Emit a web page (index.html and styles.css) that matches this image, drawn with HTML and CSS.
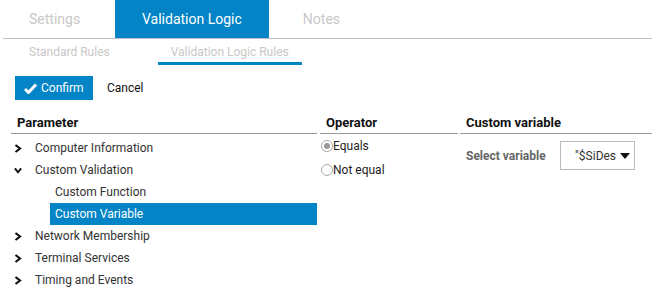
FILE: index.html
```html
<!DOCTYPE html>
<html lang="en">
<head>
  <meta charset="UTF-8" />
  <title>Validation Logic</title>
  <link rel="stylesheet" href="styles.css">
</head>
<body>
  <div class="tabs">
    <div class="tab tab-settings">Settings</div>
    <div class="tab tab-active">Validation Logic</div>
    <div class="tab tab-notes">Notes</div>
  </div>

  <div class="subtabs">
    <div class="subtab">Standard Rules</div>
    <div class="subtab subtab-active">Validation Logic Rules</div>
  </div>

  <div class="toolbar">
    <button class="btn-confirm">
      <svg width="13" height="11" viewBox="0 0 13 11"><path d="M1 6 L4.5 9.5 L12 1.5" fill="none" stroke="#fff" stroke-width="3"/></svg>
      Confirm
    </button>
    <span class="btn-cancel">Cancel</span>
  </div>

  <div class="panels">
    <div class="col col-param">
      <div class="col-head">Parameter</div>
      <ul class="tree">
        <li class="node"><svg class="chev" width="8" height="9" viewBox="0 0 8 9"><path d="M1.5 1 L6 4.5 L1.5 8" fill="none" stroke="#111" stroke-width="2.2"/></svg>Computer Information</li>
        <li class="node"><svg class="chev" width="8" height="9" viewBox="0 0 9 8"><path d="M1 1.5 L4.5 6 L8 1.5" fill="none" stroke="#111" stroke-width="2.2"/></svg>Custom Validation</li>
        <li class="leaf">Custom Function</li>
        <li class="leaf leaf-selected">Custom Variable</li>
        <li class="node"><svg class="chev" width="8" height="9" viewBox="0 0 8 9"><path d="M1.5 1 L6 4.5 L1.5 8" fill="none" stroke="#111" stroke-width="2.2"/></svg>Network Membership</li>
        <li class="node"><svg class="chev" width="8" height="9" viewBox="0 0 8 9"><path d="M1.5 1 L6 4.5 L1.5 8" fill="none" stroke="#111" stroke-width="2.2"/></svg>Terminal Services</li>
        <li class="node"><svg class="chev" width="8" height="9" viewBox="0 0 8 9"><path d="M1.5 1 L6 4.5 L1.5 8" fill="none" stroke="#111" stroke-width="2.2"/></svg>Timing and Events</li>
      </ul>
    </div>

    <div class="col col-op">
      <div class="col-head">Operator</div>
      <label class="radio"><span class="dot dot-on"></span>Equals</label>
      <label class="radio"><span class="dot"></span>Not equal</label>
    </div>

    <div class="col col-var">
      <div class="col-head">Custom variable</div>
      <div class="var-row">
        <span class="var-label">Select variable</span>
        <div class="select">
          <span class="select-text">"$SiDes</span>
          <svg width="10" height="6" viewBox="0 0 10 6"><path d="M0 0 H10 L5 6 Z" fill="#111"/></svg>
        </div>
      </div>
    </div>
  </div>
</body>
</html>
```

FILE: styles.css
```css
* {
  box-sizing: border-box;
  margin: 0;
  padding: 0;
}

body {
  font-family: Roboto, "Liberation Sans", sans-serif;
  font-size: 12px;
  color: #222;
  background: #fff;
  width: 652px;
  height: 292px;
  overflow: hidden;
  white-space: nowrap;
}

/* Top tabs */
.tabs {
  display: flex;
  height: 39px;
  margin-left: 3px;
  border-bottom: 1px solid #c0c0c0;
}

.tab {
  height: 38px;
  line-height: 38px;
  font-size: 14px;
  color: #c8c8c8;
  padding: 0 27px;
}

.tab-settings {
  width: 112px;
  padding-left: 26px;
}

.tab-active {
  background-color: #0284c6;
  color: #fff;
}

.tab-notes {
  padding-left: 34px;
}

/* Sub tabs */
.subtabs {
  display: flex;
  height: 26px;
  margin-left: 16px;
  gap: 35px;
}

.subtab {
  padding: 6px 13px 0;
  color: #c8c8c8;
  font-size: 12px;
  height: 26px;
}

.subtab-active {
  border-bottom: 3px solid #0284c6;
}

/* Confirm / cancel */
.toolbar {
  display: flex;
  align-items: center;
  margin: 11px 0 0 15px;
  height: 24px;
}

.btn-confirm {
  display: flex;
  align-items: center;
  gap: 4px;
  height: 24px;
  width: 78px;
  padding-left: 9px;
  border: none;
  background-color: #0284c6;
  color: #fff;
  font-family: inherit;
  font-size: 12px;
}

.btn-cancel {
  margin-left: 14px;
  color: #111;
}

/* Columns */
.panels {
  display: flex;
  margin-top: 15px;
}

.col-head {
  font-weight: 700;
  font-size: 13px;
  color: #111;
  height: 19px;
  line-height: 16px;
  border-bottom: 1px solid #999;
  padding-left: 6px;
}

.col-param {
  width: 306px;
  margin-left: 11px;
}

.col-op {
  width: 138px;
  margin-left: 3px;
}

.col-var {
  flex: 1;
  margin-left: 2px;
}

.tree {
  list-style: none;
  margin-top: 3px;
}

.tree li {
  height: 22px;
  line-height: 22px;
  display: flex;
  align-items: center;
}

.node {
  padding-left: 3px;
  color: #333;
}

.chev {
  margin-right: 13px;
}

.leaf {
  margin-left: 39px;
  padding-left: 5px;
  color: #333;
}

.leaf-selected {
  background-color: #0284c6;
  color: #fff;
}

/* Radios */
.radio {
  display: flex;
  align-items: center;
  height: 24px;
  color: #222;
}

.dot {
  width: 12px;
  height: 12px;
  border: 1px solid #aaa;
  border-radius: 50%;
  margin-left: 1px;
  position: relative;
}

.dot-on::after {
  content: "";
  position: absolute;
  left: 2px;
  top: 2px;
  width: 6px;
  height: 6px;
  border-radius: 50%;
  background: #999;
}

/* Custom variable */
.var-row {
  display: flex;
  align-items: center;
  margin-top: 7px;
  padding-left: 6px;
}

.var-label {
  font-weight: 700;
  color: #666;
  width: 94px;
}

.select {
  display: flex;
  align-items: center;
  justify-content: space-between;
  width: 75px;
  height: 29px;
  border: 1px solid #bbb;
  padding: 0 4px 0 14px;
  color: #333;
}
```
